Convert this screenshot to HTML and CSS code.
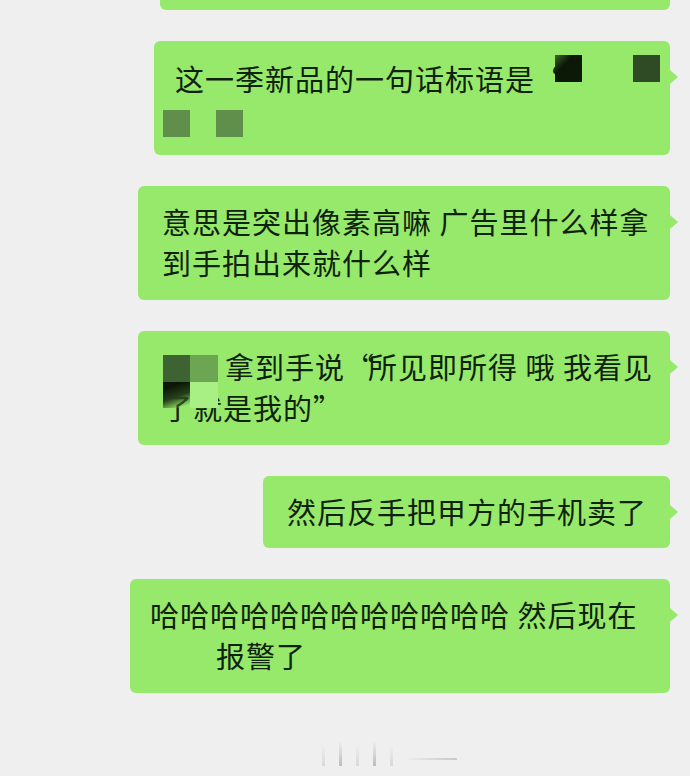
FILE: index.html
```html
<!DOCTYPE html>
<html>

<head>
  <meta charset="UTF-8">
  <title>聊天记录</title>
  <link rel="stylesheet" href="styles.css">
</head>

<body>

  <div id="chat">
    <div class="bubble cut"></div>

    <div class="bubble b2">
      这一季新品的一句话标语是“<br>&nbsp;
      <span class="mosaic m-a"></span>
      <span class="mosaic m-b"></span>
      <span class="mosaic m-c"></span>
      <span class="mosaic m-d"></span>
    </div>

    <div class="bubble b3">
      意思是突出像素高嘛 广告里什么样拿<br>到手拍出来就什么样
    </div>

    <div class="bubble b4">
      <span class="hidden-name"></span>拿到手说<span class="q">“</span>所见即所得 哦 我看见<br>了就是我的<span class="q">”</span>
      <div class="mosaic-grid">
        <span class="g1"></span>
        <span class="g2"></span>
        <span class="g3"></span>
        <span class="g4"></span>
      </div>
    </div>

    <div class="bubble b5">然后反手把甲方的手机卖了</div>

    <div class="bubble b6">
      哈哈哈哈哈哈哈哈哈哈哈哈 然后现在<br><span class="indent">报警了</span>
    </div>
  </div>

  <div id="scrollMarks">
    <span></span>
    <span class="dark"></span>
    <span></span>
    <span class="dark"></span>
    <span></span>
    <span class="dash"></span>
  </div>

</body>

</html>
```

FILE: styles.css
```css
:root {
  --bubble-green: #97e96b;
  --text-dark: #0f220b;
}

body {
  background-color: #efefef;
  margin: 0;
  width: 690px;
  height: 776px;
  overflow: hidden;

  font-family: "Noto Sans CJK SC", "Noto Sans", sans-serif;
  color: var(--text-dark);
}

#chat {
  display: flex;
  flex-direction: column;
  align-items: flex-end;
  gap: 31px;
  padding-right: 20px;
}

.bubble {
  position: relative;
  box-sizing: border-box;
  background-color: var(--bubble-green);
  border-radius: 6px;
  padding: 15px 20px 17px;

  font-size: 29px;
  letter-spacing: 1px;
  line-height: 41px;
  white-space: nowrap;
}

.bubble::after {
  content: "";
  position: absolute;
  right: -8px;
  top: 29px;
  border-left: 8px solid var(--bubble-green);
  border-top: 7px solid transparent;
  border-bottom: 7px solid transparent;
}

.cut {
  width: 510px;
  height: 10px;
  padding: 0;
  border-radius: 0 0 6px 6px;
}

.cut::after {
  display: none;
}

.b2 {
  width: 516px;
  padding-left: 21px;
  padding-top: 17px;
  padding-bottom: 15px;
}

.b3 {
  width: 532px;
  padding-left: 24px;
}

.b4 {
  width: 532px;
  padding-left: 25px;
}

.b5 {
  width: 407px;
  padding: 15px 24px 16px;
}

.b6 {
  width: 540px;
  padding-left: 20px;
}

.indent {
  display: inline-block;
  margin-left: 66px;
}

.hidden-name {
  display: inline-block;
  width: 62px;
}

.q {
  letter-spacing: -6px;
}

/* pixel blocks over names */
.mosaic {
  position: absolute;
  width: 27px;
  height: 27px;
}

.m-a {
  left: 401px;
  top: 14px;
  background: linear-gradient(135deg, #3c6b2c 0%, #0b1806 35%, #0c1a08 100%);
}

.m-b {
  left: 479px;
  top: 14px;
  background-color: #2f4b26;
}

.m-c {
  left: 9px;
  top: 69px;
  background-color: #5f8f4b;
}

.m-d {
  left: 62px;
  top: 69px;
  background-color: #5f8f4b;
}

.mosaic-grid {
  position: absolute;
  left: 25px;
  top: 24px;
  display: grid;
  grid-template-columns: 27px 28px;
  grid-template-rows: 27px 26px;
}

.g1 {
  background-color: #3e6332;
}

.g2 {
  background-color: #6da653;
}

.g3 {
  background: linear-gradient(160deg, #0b1607 20%, #24401a 55%, rgba(151, 233, 107, 0.2) 90%);
}

.g4 {
  background-color: #a8ef84;
}

#scrollMarks {
  display: flex;
  align-items: flex-end;
  gap: 14px;
  height: 28px;
  margin-top: 45px;
  padding-left: 322px;
}

#scrollMarks span {
  width: 3px;
  height: 24px;
  background: linear-gradient(#f2f2f2, #d9d9d9);
}

#scrollMarks .dark {
  background: linear-gradient(#ededed, #bdbdbd);
}

#scrollMarks .dash {
  width: 50px;
  height: 2px;
  margin-bottom: 6px;
  background: linear-gradient(90deg, #ececec, #c9c9c9);
}
```
